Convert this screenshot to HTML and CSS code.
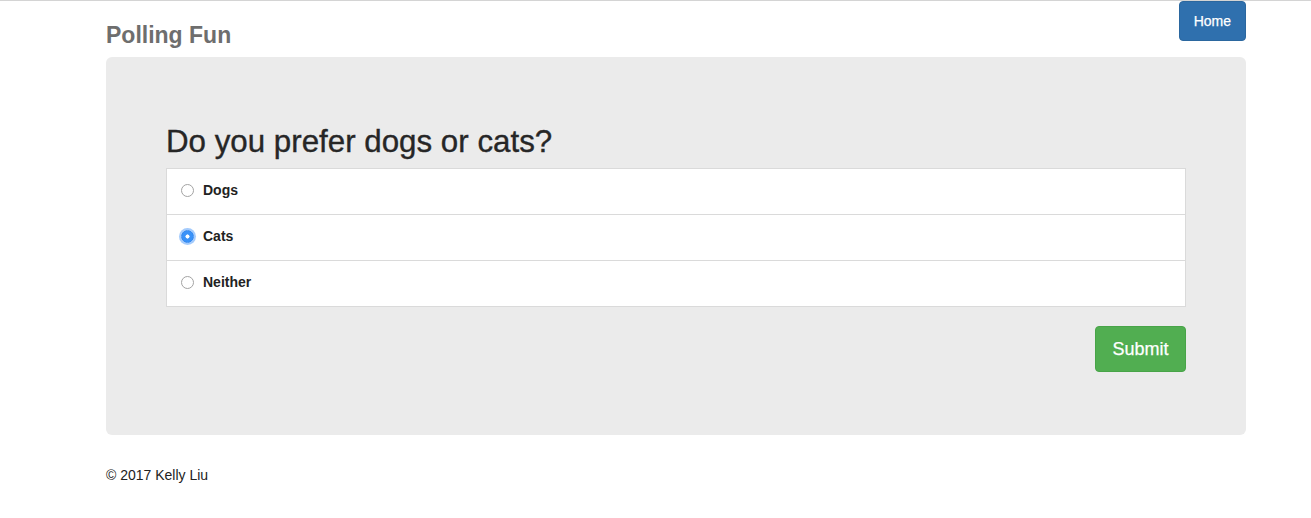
FILE: index.html
```html
<!DOCTYPE html>
<html>
<head>
<meta charset="utf-8">
<title>Polling Fun</title>
<link rel="stylesheet" href="styles.css">
</head>
<body>
<div class="page">
  <header class="header">
    <div class="brand">Polling Fun</div>
    <a class="btn btn-primary" href="#">Home</a>
  </header>
  <main class="jumbotron">
    <h2 class="question">Do you prefer dogs or cats?</h2>
    <form class="poll">
      <ul class="list-group">
        <li class="list-item"><label class="choice"><input type="radio" name="pet" class="radio"><span>Dogs</span></label></li>
        <li class="list-item"><label class="choice"><input type="radio" name="pet" class="radio" checked><span>Cats</span></label></li>
        <li class="list-item"><label class="choice"><input type="radio" name="pet" class="radio"><span>Neither</span></label></li>
      </ul>
      <div class="actions">
        <button type="button" class="btn btn-success">Submit</button>
      </div>
    </form>
  </main>
  <footer class="footer">© 2017 Kelly Liu</footer>
</div>
</body>
</html>
```
FILE: styles.css
```css
* { box-sizing: border-box; }
html, body { margin: 0; padding: 0; }
body {
  font-family: "Liberation Sans", Arial, Helvetica, sans-serif;
  font-size: 14px;
  line-height: 20px;
  color: #333;
  background: #fff;
  border-top: 1px solid #d4d4d4;
}
.page {
  width: 1140px;
  margin-left: 106px;
}
.header {
  display: flex;
  justify-content: space-between;
  align-items: flex-start;
  height: 56px;
}
.brand {
  margin-top: 21px;
  font-size: 23px;
  line-height: 26px;
  font-weight: bold;
  color: #6e6e6e;
}
.btn {
  display: inline-block;
  border: 1px solid transparent;
  border-radius: 4px;
  color: #fff;
  text-decoration: none;
  font-family: inherit;
  cursor: pointer;
  -webkit-text-stroke: 0.25px #fff;
}
.btn-primary {
  background: #2f70ae;
  border-color: #2b679f;
  font-size: 14px;
  line-height: 20px;
  padding: 9px 14px;
  height: 40px;
}
.btn-success {
  background: #51ae51;
  border-color: #48a448;
  font-size: 18px;
  line-height: 24px;
  padding: 10px 16px;
  height: 46px;
  width: 91px;
}
.jumbotron {
  background: #ebebeb;
  border-radius: 6px;
  padding: 48px 60px 63px;
}
.question {
  margin: 20px 0 9px;
  font-size: 31.3px;
  line-height: 34px;
  font-weight: 500;
  color: #262626;
  -webkit-text-stroke: 0.35px #262626;
}
.poll { margin: 0; }
.list-group {
  list-style: none;
  margin: 0;
  padding: 0;
  background: #fff;
}
.list-item {
  border: 1px solid #dadada;
  margin-bottom: -1px;
  padding: 11px 14px 14px;
  background: #fff;
}
.list-item:last-child { margin-bottom: 0; }
.choice {
  display: flex;
  align-items: center;
  gap: 9px;
  font-weight: bold;
  color: #222;
  cursor: pointer;
}
.radio {
  -webkit-appearance: none;
  appearance: none;
  margin: 0;
  width: 13px;
  height: 13px;
  border-radius: 50%;
  border: 1px solid #a3a3a3;
  background: #fff;
  flex: none;
}
.radio:checked {
  border-color: #2f86f0;
  background: radial-gradient(circle, #fff 0 1.8px, #3a92f8 2.3px);
  box-shadow: 0 0 0 2px rgba(90, 160, 250, 0.55);
}
.actions {
  display: flex;
  justify-content: flex-end;
  margin-top: 19px;
}
.footer {
  margin-top: 30px;
  font-size: 14px;
  line-height: 20px;
  color: #222;
}
```
